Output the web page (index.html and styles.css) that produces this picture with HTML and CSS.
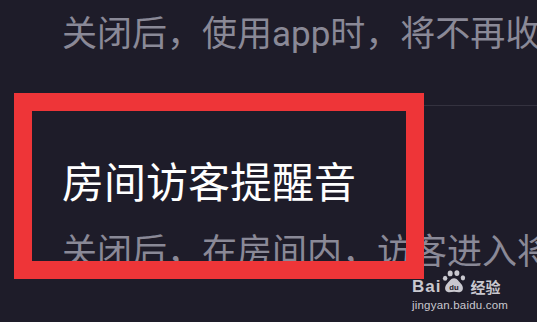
FILE: index.html
```html
<!DOCTYPE html>
<html lang="zh">
<head>
<meta charset="utf-8">
<link rel="stylesheet" href="styles.css">
</head>
<body>
<div class="screen">
  <div class="item first">
    <p class="desc">关闭后，使用app时，将不再收到提醒</p>
  </div>
  <div class="divider"></div>
  <div class="item">
    <h2 class="title">房间访客提醒音</h2>
    <p class="desc">关闭后，在房间内，访客进入将不再提醒</p>
  </div>
  <div class="highlight"></div>
  <div class="watermark">
    <div class="wm-top">
      <span class="wm-bai">Bai</span>
      <svg class="wm-paw" viewBox="0 0 26 24" width="25" height="23">
        <ellipse cx="8.5" cy="3.6" rx="2.6" ry="3" fill="#c9c8cf"/>
        <ellipse cx="15.5" cy="3.2" rx="2.6" ry="3" fill="#c9c8cf"/>
        <ellipse cx="3.2" cy="8.6" rx="2.3" ry="2.7" fill="#c9c8cf"/>
        <ellipse cx="21.8" cy="8.2" rx="2.3" ry="2.7" fill="#c9c8cf"/>
        <path d="M12.5 8.5 C9 8.5 7.5 12 5 14.5 C2.5 17 2.5 22 6 23 C8.5 23.6 10.3 22.6 12.5 22.6 C14.7 22.6 16.5 23.6 19 23 C22.5 22 22.5 17 20 14.5 C17.5 12 16 8.5 12.5 8.5 Z" fill="#c9c8cf"/>
        <text x="12.5" y="20.8" text-anchor="middle" class="wm-du">du</text>
      </svg>
      <span class="wm-jy">经验</span>
    </div>
    <div class="wm-url">jingyan.baidu.com</div>
  </div>
</div>
</body>
</html>
```
FILE: styles.css
```css
html, body {
  margin: 0;
  padding: 0;
  background: #1e1c29;
}
.screen {
  position: relative;
  width: 537px;
  height: 322px;
  overflow: hidden;
  background: #1e1c29;
  font-family: Roboto, "Noto Sans CJK SC", sans-serif;
}
.item {
  padding-left: 62px;
}
.item.first {
  padding-top: 17px;
}
.desc {
  margin: 0;
  font-size: 35px;
  line-height: 35px;
  color: #8a8997;
  white-space: nowrap;
}
.divider {
  margin-top: 53px;
  margin-left: 62px;
  height: 1px;
  background: #34323f;
}
.title {
  margin: 57px 0 0 0;
  font-weight: normal;
  font-size: 42px;
  line-height: 42px;
  color: #ffffff;
  white-space: nowrap;
}
.item .title + .desc {
  margin-top: 30px;
}
.highlight {
  position: absolute;
  left: 14px;
  top: 93px;
  width: 374px;
  height: 150px;
  border: 18px solid #ee3538;
}
.watermark {
  position: absolute;
  left: 412px;
  top: 270px;
  color: #c9c8cf;
}
.wm-top {
  display: flex;
  align-items: flex-end;
  height: 23px;
}
.wm-bai {
  font-family: "Liberation Sans", sans-serif;
  font-weight: bold;
  font-size: 17px;
  line-height: 14px;
  letter-spacing: 1px;
  height: 13px;
  overflow: visible;
}
.wm-paw {
  margin: 0 3px 0 1px;
  display: block;
}
.wm-du {
  font-family: "Liberation Sans", sans-serif;
  font-weight: bold;
  font-size: 8px;
  fill: #1e1c29;
}
.wm-jy {
  font-family: "Noto Sans CJK SC", sans-serif;
  font-weight: bold;
  font-size: 15px;
  line-height: 15px;
  margin-bottom: -1px;
}
.wm-url {
  margin-top: 6px;
  font-family: "Liberation Sans", sans-serif;
  font-size: 11.5px;
  line-height: 12px;
  letter-spacing: 0.2px;
}
```
